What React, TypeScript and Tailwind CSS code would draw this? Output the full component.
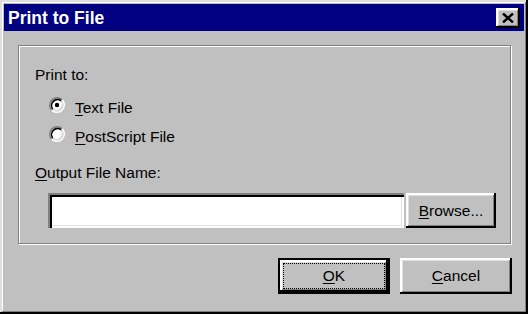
function RadioMark({ checked }: { checked: boolean }) {
  return (
    <svg width="16" height="16" viewBox="0 0 16 16" className="shrink-0">
      <circle cx="8" cy="8" r="5.5" fill="#fff" />
      <path d="M 2.7 13.3 A 7.5 7.5 0 0 1 13.3 2.7" fill="none" stroke="#808080" strokeWidth="1.5" />
      <path d="M 13.3 2.7 A 7.5 7.5 0 0 1 2.7 13.3" fill="none" stroke="#fff" strokeWidth="1.5" />
      <path d="M 3.8 12.2 A 6 6 0 0 1 12.2 3.8" fill="none" stroke="#000" strokeWidth="1.5" />
      <path d="M 12.2 3.8 A 6 6 0 0 1 3.8 12.2" fill="none" stroke="#dfdfdf" strokeWidth="1.5" />
      {checked && <circle cx="8" cy="8" r="2.2" fill="#000" />}
    </svg>
  )
}

function Radio({ checked, accel, rest }: { checked: boolean; accel: string; rest: string }) {
  return (
    <div className="flex h-[29px] items-start pl-[14px]">
      <div className="mt-[4px]">
        <RadioMark checked={checked} />
      </div>
      <span className="ml-[10px] mt-[6px] leading-[18px]">
        <span className="underline underline-offset-2">{accel}</span>
        {rest}
      </span>
    </div>
  )
}

const raised =
  "shadow-[inset_-2px_-2px_#000,inset_2px_2px_#fff,inset_-3px_-3px_#808080,inset_3px_3px_#dfdfdf]"

export default function App() {
  return (
    <div
      className="flex h-[314px] w-[528px] flex-col bg-[#c0c0c0] p-[4px] text-[15.5px] text-black shadow-[inset_-2px_-2px_#000,inset_2px_2px_#dfdfdf,inset_-3px_-3px_#808080,inset_3px_3px_#fff]"
      style={{ fontFamily: '"Liberation Sans", Arial, sans-serif' }}
    >
      {/* title bar */}
      <div className="flex h-[27px] shrink-0 items-center justify-between bg-[#000080] pl-[4px] pr-[4px]">
        <span className="text-[17.5px] font-bold leading-[20px] text-white">Print to File</span>
        <button className={`flex h-[20px] w-[24px] items-center justify-center bg-[#c0c0c0] ${raised}`}>
          <svg width="12" height="10" viewBox="0 0 12 10">
            <path d="M1 0.5 L11 9.5 M11 0.5 L1 9.5" stroke="#000" strokeWidth="2.4" />
          </svg>
        </button>
      </div>

      {/* group box */}
      <div className="ml-[14px] mt-[14px] h-[199px] w-[493px] border border-[#808080] pl-[16px] pt-[20px] shadow-[inset_1px_1px_#fff,1px_1px_#fff]">
        <div className="leading-[18px]">Print to:</div>
        <div className="mt-[9px] flex flex-col">
          <Radio checked accel="T" rest="ext File" />
          <Radio checked={false} accel="P" rest="ostScript File" />
        </div>
        <div className="mt-[13px] leading-[18px]">
          <span className="underline underline-offset-2">O</span>utput File Name:
        </div>
        <div className="ml-[13px] mt-[11px] flex gap-[2px]">
          <input
            className="h-[35px] w-[356px] bg-white px-[6px] outline-none shadow-[inset_2px_2px_#808080,inset_4px_4px_#000,inset_-2px_-2px_#fff,inset_-3px_-3px_#dfdfdf]"
            defaultValue=""
          />
          <button className={`h-[35px] w-[90px] bg-[#c0c0c0] leading-[18px] ${raised}`}>
            <span className="underline underline-offset-2">B</span>rowse...
          </button>
        </div>
      </div>

      {/* buttons */}
      <div className="mr-[12px] mt-[14px] flex justify-end gap-[10px]">
        <button className="h-[36px] w-[112px] border-2 border-black bg-[#c0c0c0] p-0">
          <div className={`flex h-full w-full items-center justify-center p-[3px] ${raised}`}>
            <div className="flex h-full w-full items-center justify-center border border-dotted border-black leading-[18px]">
              <span className="underline underline-offset-2">O</span>K
            </div>
          </div>
        </button>
        <button className={`h-[36px] w-[112px] bg-[#c0c0c0] leading-[18px] ${raised}`}>
          <span className="underline underline-offset-2">C</span>ancel
        </button>
      </div>
    </div>
  )
}
